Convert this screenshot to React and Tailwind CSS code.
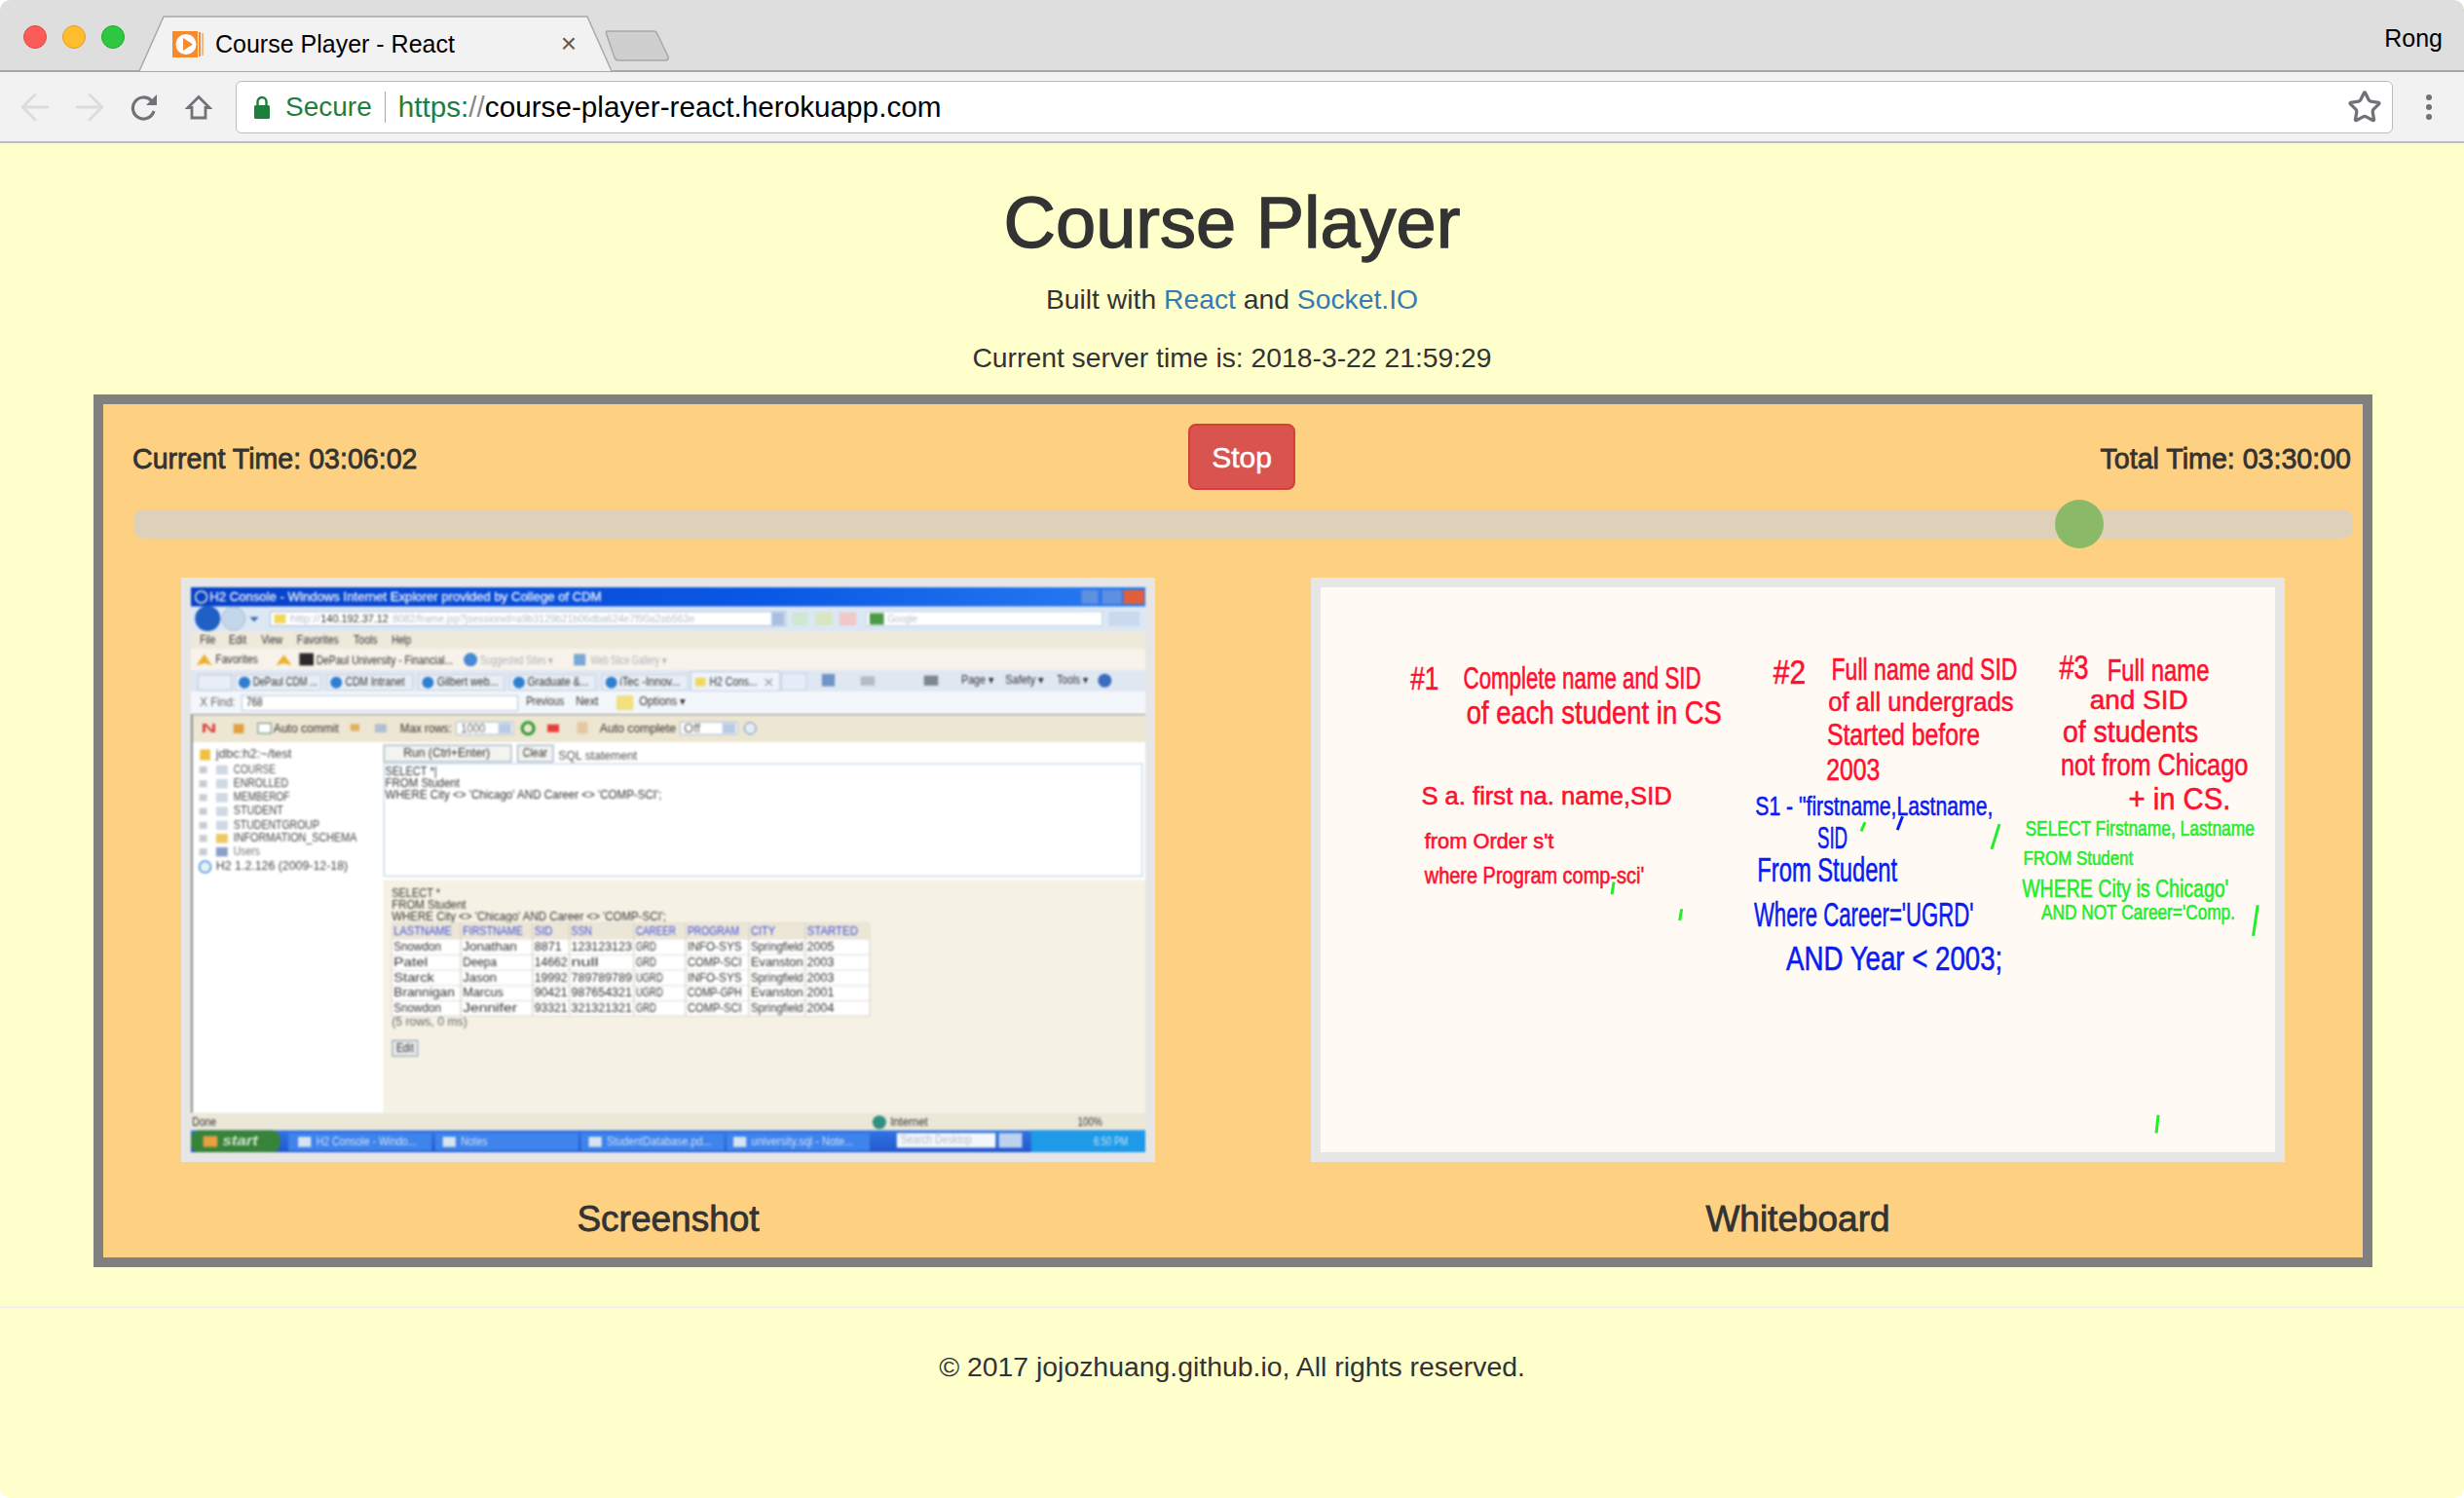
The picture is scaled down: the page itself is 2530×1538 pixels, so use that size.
import { ArrowLeft, ArrowRight, Star } from 'lucide-react';

// Canvas places below were read off a 1478x1467 grid, px/py turn them into the 980x580 picture
const px = (x) => (x - 39) / 1.508;
const py = (y) => (y - 35) / 2.529;

const T = ({ x, y, w, s = 30, c = '#333', b = false, it = false, line = 0, children }) => (
  <text
    x={px(x)}
    y={py(y)}
    textLength={w / 1.508}
    lengthAdjust="spacingAndGlyphs"
    fontSize={s / 2.529}
    fill={c}
    stroke={line ? c : 'none'}
    strokeWidth={line}
    fontWeight={b ? 700 : 400}
    fontStyle={it ? 'italic' : 'normal'}
    fontFamily="'Liberation Sans', sans-serif"
  >
    {children}
  </text>
);

const R = ({ x, y, w, h, c, line, rx }) => (
  <rect x={px(x)} y={py(y)} width={w / 1.508} height={h / 2.529} fill={c} stroke={line} strokeWidth={line ? 1 : 0} rx={rx} />
);

const Dot = ({ x, y, r, c, line, lw = 1 }) => (
  <circle cx={px(x)} cy={py(y)} r={r} fill={c} stroke={line} strokeWidth={line ? lw : 0} />
);

const Poly = ({ pts, c }) => (
  <polygon points={pts.map(([x, y]) => `${px(x)},${py(y)}`).join(' ')} fill={c} />
);

const treeRows = [
  ['COURSE', 517, 65, '#555'],
  ['ENROLLED', 553, 85, '#444'],
  ['MEMBEROF', 589, 87, '#444'],
  ['STUDENT', 625, 77, '#444'],
  ['STUDENTGROUP', 661, 133, '#444'],
  ['INFORMATION_SCHEMA', 695, 191, '#444'],
  ['Users', 730, 41, '#777'],
];

const columns = [350, 457, 568, 625, 725, 805, 903, 990, 1090];
const headers = [['LASTNAME', 90], ['FIRSTNAME', 93], ['SID', 28], ['SSN', 32], ['CAREER', 62], ['PROGRAM', 80], ['CITY', 38], ['STARTED', 79]];
const tableRows = [
  ['Snowdon', 'Jonathan', '8871', '123123123', 'GRD', 'INFO-SYS', 'Springfield', '2005'],
  ['Patel', 'Deepa', '14662', 'null', 'GRD', 'COMP-SCI', 'Evanston', '2003'],
  ['Starck', 'Jason', '19992', '789789789', 'UGRD', 'INFO-SYS', 'Springfield', '2003'],
  ['Brannigan', 'Marcus', '90421', '987654321', 'UGRD', 'COMP-GPH', 'Evanston', '2001'],
  ['Snowdon', 'Jennifer', '93321', '321321321', 'GRD', 'COMP-SCI', 'Springfield', '2004'],
];

const ieTabs = [
  ['DePaul CDM ...', 135, 100, 108],
  ['CDM Intranet', 278, 92, 250],
  ['Gilbert web...', 420, 95, 392],
  ['Graduate &...', 560, 95, 533],
  ['iTec -Innov...', 703, 94, 676],
];

const taskButtons = [
  ['H2 Console - Windo...', 190, 233, 155],
  ['Notes', 417, 457, 41],
  ['StudentDatabase.pd...', 643, 683, 162],
  ['university.sql - Note...', 868, 907, 158],
];

const ScreenshotPicture = () => (
  <svg viewBox="0 0 980 580" className="block h-full w-full blur-[1.1px]">
    <defs>
      <linearGradient id="titleBar" x1="0" x2="1" y1="0" y2="0">
        <stop offset="0" stopColor="#0640c8" />
        <stop offset="0.6" stopColor="#0a58e6" />
        <stop offset="1" stopColor="#2a7cf2" />
      </linearGradient>
      <linearGradient id="taskBar" x1="0" x2="0" y1="0" y2="1">
        <stop offset="0" stopColor="#2f74e6" />
        <stop offset="1" stopColor="#2458cc" />
      </linearGradient>
    </defs>
    <R x={39} y={35} w={1478} h={1467} c="#f5f1e4" />
    <R x={39} y={35} w={1478} h={50} c="url(#titleBar)" />
    <Dot x={55} y={60} r={6} c="none" line="#e0e8d0" lw={1.5} />
    <T x={68} y={71} w={607} s={32} c="#e8eefc" line={0.3}>H2 Console - Windows Internet Explorer provided by College of CDM</T>
    <R x={1418} y={42} w={26} h={36} c="#5f8fe0" />
    <R x={1450} y={42} w={30} h={36} c="#5f8fe0" />
    <R x={1483} y={42} w={32} h={36} c="#e0603c" />

    <R x={39} y={85} w={1478} h={65} c="#dce7f4" />
    <Dot x={65} y={116} r={13} c="#2060c4" />
    <Dot x={105} y={116} r={12} c="#c4d6ea" line="#a8bcd4" />
    <Poly pts={[[130, 112], [144, 112], [137, 124]]} c="#3668b0" />
    <R x={162} y={98} w={798} h={37} c="#fff" line="#a9bdd6" />
    <R x={168} y={105} w={18} h={24} c="#f0d860" />
    <T x={193} y={127} w={46} s={28} c="#b4bfcc">http://</T>
    <T x={240} y={127} w={105} s={28} c="#333">140.192.37.12</T>
    <T x={347} y={127} w={472} s={28} c="#b4bfcc">:8082/frame.jsp?jsessionid=a9b3129b21b06dba624e7f90a2ab563e</T>
    <R x={938} y={100} w={20} h={33} c="#a9bfe0" />
    <R x={970} y={100} w={24} h={34} c="#cfe6d2" />
    <R x={1006} y={100} w={26} h={34} c="#d9e6c0" />
    <R x={1043} y={100} w={26} h={34} c="#f0c8c8" />
    <R x={1085} y={98} w={365} h={37} c="#fff" line="#c2d0e2" />
    <R x={1090} y={102} w={22} h={30} c="#4a9a48" />
    <T x={1118} y={127} w={46} s={28} c="#b6bfcb">Google</T>
    <R x={1460} y={98} w={48} h={37} c="#c9d9ee" />

    <R x={39} y={150} w={1478} h={45} c="#efe9dc" />
    {[['File', 53, 24], ['Edit', 98, 27], ['View', 148, 33], ['Favorites', 203, 65], ['Tools', 291, 37], ['Help', 350, 30]].map(([t, x, w]) => (
      <T key={t} x={x} y={181} w={w}>{t}</T>
    ))}

    <R x={39} y={195} w={1478} h={55} c="#f7f3ea" />
    <Poly pts={[[60, 208], [66, 224], [72, 238], [60, 232], [48, 238], [53, 224]]} c="#eeb030" />
    <T x={77} y={233} w={66}>Favorites</T>
    <Poly pts={[[183, 210], [190, 225], [195, 238], [183, 232], [171, 238], [176, 225]]} c="#eeb030" />
    <R x={207} y={206} w={22} h={32} c="#2a2a2a" />
    <T x={233} y={234} w={212}>DePaul University - Financial...</T>
    <Dot x={472} y={223} r={7} c="#4a88d8" />
    <T x={487} y={234} w={113} c="#aeb4ba">Suggested Sites ▾</T>
    <R x={632} y={208} w={18} h={30} c="#7aa6d8" />
    <T x={658} y={234} w={117} c="#aeb4ba">Web Slice Gallery ▾</T>

    <R x={39} y={250} w={1478} h={55} c="#dfe7f3" />
    <R x={50} y={262} w={52} h={40} c="#e9eef6" line="#b9c8dc" />
    {ieTabs.map(([t, x, w, bx]) => (
      <g key={t}>
        <R x={bx} y={262} w={132} h={40} c="#e9eef6" line="#c6d2e2" />
        <Dot x={bx + 14} y={282} r={6} c="#2f7fd0" />
        <T x={x} y={291} w={w}>{t}</T>
      </g>
    ))}
    <R x={813} y={254} w={138} h={50} c="#eef3fa" line="#b9c8dc" />
    <R x={820} y={270} w={16} h={22} c="#f0d860" />
    <T x={842} y={290} w={74}>H2 Cons...</T>
    <T x={927} y={290} w={14} c="#999">x</T>
    <R x={954} y={258} w={38} h={44} c="#e6edf8" line="#c6d2e2" />
    <R x={1016} y={260} w={20} h={32} c="#6f94c6" />
    <R x={1076} y={266} w={22} h={24} c="#b6bcc4" />
    <R x={1174} y={264} w={22} h={26} c="#7d8792" />
    <T x={1232} y={286} w={50}>Page ▾</T>
    <T x={1300} y={286} w={60}>Safety ▾</T>
    <T x={1380} y={286} w={48}>Tools ▾</T>
    <Dot x={1454} y={277} r={7} c="#3a6cc0" />

    <R x={39} y={305} w={1478} h={60} c="#f3f6fb" />
    <T x={53} y={344} w={55} c="#666">X Find:</T>
    <R x={118} y={316} w={427} h={39} c="#fff" line="#b7c6da" />
    <T x={125} y={344} w={25}>768</T>
    <T x={558} y={342} w={59}>Previous</T>
    <T x={635} y={342} w={35}>Next</T>
    <R x={698} y={316} w={26} h={38} c="#f0e080" />
    <T x={733} y={342} w={72}>Options ▾</T>
    <R x={39} y={364} w={1478} h={3} c="#8d8d8d" />

    <R x={39} y={367} w={1478} h={70} c="#ece6d2" />
    <T x={55} y={412} w={24} s={34} c="#e0403c" b>N</T>
    <R x={105} y={390} w={16} h={24} c="#e0a040" />
    <R x={143} y={388} w={20} h={26} c="#fff" line="#5a8a7a" />
    <T x={167} y={411} w={101}>Auto commit</T>
    <R x={286} y={390} w={14} h={18} c="#e0b060" />
    <R x={324} y={390} w={18} h={22} c="#b0c0d0" />
    <T x={363} y={411} w={80}>Max rows:</T>
    <R x={450} y={385} w={88} h={32} c="#fff" line="#a9bdd6" />
    <T x={457} y={411} w={38} c="#666">1000</T>
    <R x={515} y={388} w={20} h={26} c="#b9cbe4" />
    <Dot x={561} y={401} r={6} c="none" line="#2f9a2f" lw={3} />
    <R x={591} y={391} w={18} h={20} c="#e83a3a" />
    <R x={637} y={385} w={16} h={30} c="#e4c8a0" />
    <T x={672} y={411} w={118}>Auto complete</T>
    <R x={797} y={385} w={88} h={32} c="#fff" line="#a9bdd6" />
    <T x={802} y={411} w={26} c="#666">Off</T>
    <R x={862} y={388} w={20} h={26} c="#b9cbe4" />
    <Dot x={905} y={401} r={6} c="#e4ecf6" line="#6a8ab8" />

    <R x={39} y={437} w={298} h={963} c="#fff" />
    <R x={39} y={367} w={3} h={1033} c="#8d8d8d" />
    <R x={53} y={456} w={16} h={28} c="#f0c040" />
    <T x={78} y={478} w={117} c="#444">jdbc:h2:~/test</T>
    {treeRows.map(([t, y, w, c]) => (
      <g key={t}>
        <R x={52} y={y - 17} w={12} h={18} c="#c8ccd2" />
        <R x={78} y={y - 20} w={18} h={24} c={t === 'INFORMATION_SCHEMA' ? '#efc860' : t === 'Users' ? '#8aa0c8' : '#cfd8e4'} />
        <T x={105} y={y} w={w} c={c}>{t}</T>
      </g>
    ))}
    <Dot x={61} y={761} r={6} c="#e4f0fa" line="#4a90d0" lw={1.5} />
    <T x={78} y={768} w={204} c="#444">H2 1.2.126 (2009-12-18)</T>

    <R x={337} y={437} w={1180} h={358} c="#fff" />
    <R x={338} y={445} w={197} h={43} c="#f3f3ef" line="#8aa2b8" />
    <T x={368} y={475} w={134}>Run (Ctrl+Enter)</T>
    <R x={545} y={445} w={55} h={43} c="#f3f3ef" line="#8aa2b8" />
    <T x={553} y={475} w={38}>Clear</T>
    <T x={608} y={482} w={122} c="#555">SQL statement</T>
    <R x={338} y={493} w={1174} h={292} c="#fff" line="#b7cbe3" />
    <T x={340} y={523} w={80}>SELECT *|</T>
    <T x={340} y={553} w={115}>FROM Student</T>
    <T x={340} y={585} w={428}>{"WHERE City <> 'Chicago' AND Career <> 'COMP-SCI';"}</T>

    <T x={350} y={840} w={75}>SELECT *</T>
    <T x={350} y={870} w={115}>FROM Student</T>
    <T x={350} y={900} w={425}>{"WHERE City <> 'Chicago' AND Career <> 'COMP-SCI';"}</T>
    <R x={350} y={907} w={740} h={241} c="#fff" line="#d8d4c6" />
    <R x={350} y={907} w={740} h={40} c="#ece6d6" />
    {columns.slice(1, -1).map((x) => <R key={x} x={x - 1} y={907} w={2} h={241} c="#d8d4c6" />)}
    {[947, 988, 1028, 1068, 1108].map((y) => <R key={y} x={350} y={y} w={740} h={2} c="#d8d4c6" />)}
    {headers.map(([t, w], n) => (
      <T key={t} x={columns[n] + 3} y={937} w={w} c="#3c50e0">{t}</T>
    ))}
    {tableRows.map((row, r) =>
      row.map((cell, n) => (
        <T key={`${r}-${n}`} x={columns[n] + 3} y={978 + r * 40} w={Math.min(cell.length * 10.5, columns[n + 1] - columns[n] - 6)}>{cell}</T>
      ))
    )}
    <T x={350} y={1172} w={117} c="#666">(5 rows, 0 ms)</T>
    <R x={351} y={1212} w={39} h={40} c="#e8eaea" line="#7f9aac" />
    <T x={357} y={1242} w={27}>Edit</T>

    <R x={39} y={1400} w={1478} h={45} c="#ece8d8" />
    <T x={41} y={1434} w={37}>Done</T>
    <Dot x={1105} y={1424} r={7} c="#2f9080" />
    <T x={1122} y={1434} w={58}>Internet</T>
    <T x={1412} y={1434} w={38}>100%</T>

    <R x={39} y={1445} w={1478} h={57} c="url(#taskBar)" />
    <R x={39} y={1445} w={138} h={57} c="#37833a" rx={8} />
    <R x={58} y={1460} w={22} h={28} c="#e8a040" />
    <T x={88} y={1485} w={55} s={36} c="#cfe4cc" b it>start</T>
    {taskButtons.map(([t, bx, x, w]) => (
      <g key={t}>
        <R x={bx} y={1452} w={222} h={46} c="#3f83ec" />
        <R x={x - 28} y={1462} w={20} h={26} c="#d8e4f0" />
        <T x={x} y={1483} w={w} c="#cfe0f6">{t}</T>
      </g>
    ))}
    <R x={1132} y={1452} w={153} h={38} c="#f4f7fb" />
    <T x={1138} y={1480} w={110} c="#b6c2d0">Search Desktop</T>
    <R x={1290} y={1452} w={36} h={38} c="#bcd2ee" />
    <R x={1340} y={1445} w={177} h={57} c="#1e9ae8" />
    <T x={1437} y={1483} w={53} c="#bfe2f8">6:50 PM</T>
  </svg>
);

const RED = '#ff1030';
const BLUE = '#0a1cf0';
const GREEN = '#22ee2a';

const boardLines = [
  ['#1', 178, 300, 44, 84, RED],
  ['Complete name and SID', 260, 298, 368, 78, RED],
  ['of each student in CS', 265, 390, 395, 84, RED],
  ['#2', 740, 285, 50, 88, RED],
  ['Full name and SID', 830, 275, 288, 80, RED],
  ['of all undergrads', 825, 355, 287, 72, RED],
  ['Started before', 823, 445, 237, 80, RED],
  ['2003', 822, 535, 83, 80, RED],
  ['#3', 1183, 272, 45, 88, RED],
  ['Full name', 1257, 278, 158, 78, RED],
  ['and SID', 1230, 350, 152, 72, RED],
  ['of students', 1188, 438, 210, 80, RED],
  ['not from Chicago', 1185, 522, 290, 80, RED],
  ['+ in CS.', 1290, 612, 158, 80, RED],
  ['S a. first na. name,SID', 195, 600, 388, 64, RED],
  ["from Order s't", 200, 712, 200, 58, RED],
  ["where Program comp-sci'", 200, 805, 340, 60, RED],
  ['S1 - "firstname,Lastname,', 712, 628, 368, 72, BLUE],
  ['SID', 808, 712, 47, 80, BLUE],
  ['From Student', 715, 800, 217, 90, BLUE],
  ["Where Career='UGRD'", 710, 915, 340, 90, BLUE],
  ['AND Year < 2003;', 760, 1030, 335, 90, BLUE],
  ['SELECT Firstname, Lastname', 1130, 680, 355, 58, GREEN],
  ['FROM Student', 1127, 755, 170, 50, GREEN],
  ["WHERE City is Chicago'", 1125, 838, 320, 64, GREEN],
  ["AND NOT Career='Comp.", 1155, 897, 300, 56, GREEN],
];

const boardMarks = [
  [1090, 650, 1078, 715, GREEN],
  [1490, 860, 1483, 940, GREEN],
  [493, 800, 490, 832, GREEN],
  [598, 870, 595, 900, GREEN],
  [1336, 1405, 1333, 1452, GREEN],
  [882, 645, 876, 668, GREEN],
  [940, 630, 932, 665, BLUE],
];

const WhiteboardPicture = () => (
  <svg viewBox="0 0 980 580" className="block h-full w-full">
    {boardLines.map(([t, x, y, w, s, c]) => (
      <T key={t} x={x} y={y} w={w} s={s} c={c} line={0.6}>{t}</T>
    ))}
    {boardMarks.map(([x1, y1, x2, y2, c]) => (
      <line key={x1} x1={px(x1)} y1={py(y1)} x2={px(x2)} y2={py(y2)} stroke={c} strokeWidth={3} />
    ))}
  </svg>
);

const Favicon = () => (
  <svg width="32" height="27" viewBox="0 0 32 27" className="shrink-0">
    <rect width="26" height="27" fill="#f58a2e" />
    <rect x="27" y="1" width="2" height="25" fill="#f58a2e" />
    <rect x="30" y="2" width="2" height="23" fill="#f9b67a" />
    <circle cx="14" cy="13.5" r="10.5" fill="#fff" />
    <path d="M11 7 L21 13.5 L11 20 Z" fill="#f58a2e" />
  </svg>
);

const ReloadIcon = () => (
  <svg width="28" height="27" viewBox="0 0 28 27" fill="none" className="shrink-0">
    <path d="M21.5 6.5 A11 11 0 1 0 24 17" stroke="#6f7277" strokeWidth="3.2" />
    <path d="M27 0 V11 H16 Z" fill="#6f7277" />
  </svg>
);

const HomeIcon = () => (
  <svg width="28" height="26" viewBox="0 0 28 26" fill="none" stroke="#6f7277" strokeWidth="2.8" className="shrink-0">
    <path d="M14 2.5 L25 13.5 H21 V24 H7 V13.5 H3 Z" />
  </svg>
);

const LockIcon = () => (
  <svg width="18" height="24" viewBox="0 0 18 24" className="shrink-0">
    <rect x="1" y="10" width="16" height="14" rx="1.5" fill="#1e7e3e" />
    <path d="M4.5 11 V6.5 a4.5 4.5 0 0 1 9 0 V11" fill="none" stroke="#1e7e3e" strokeWidth="2.4" />
  </svg>
);

const App = () => {
  return (
    <div className="h-[1538px] overflow-hidden rounded-[10px] bg-[#ffffcc] font-['Liberation_Sans',sans-serif] text-[#333]">
      {/* browser tab strip */}
      <div className="flex h-[74px] items-end rounded-t-[10px] border-b-2 border-[#a8a8a8] bg-[#dedede]">
        <div className="flex h-full w-[143px] shrink-0 items-center gap-4 pl-6">
          <span className="mt-1 h-6 w-6 rounded-full border border-[#e2463f] bg-[#fc5c57]" />
          <span className="mt-1 h-6 w-6 rounded-full border border-[#dfa023] bg-[#febc2e]" />
          <span className="mt-1 h-6 w-6 rounded-full border border-[#1dad2b] bg-[#2ec840]" />
        </div>
        <div className="relative -mb-[2px] flex h-[58px] w-[485px] shrink-0 items-center pl-[34px] pr-[36px]">
          <svg viewBox="0 0 485 58" className="absolute inset-0 h-full w-full">
            <path d="M0 57 L25 1 H460 L485 57" fill="#f2f2f2" stroke="#a8a8a8" strokeWidth="1.5" />
          </svg>
          <div className="relative flex w-full items-center">
            <Favicon />
            <span className="ml-[12px] flex-1 text-[25px] leading-none text-black">Course Player - React</span>
            <span className="text-[28px] leading-none text-[#5a5a5a]">×</span>
          </div>
        </div>
        <svg width="68" height="34" viewBox="0 0 68 34" className="mb-2 -ml-[7px] shrink-0">
          <path d="M2 2 H50 Q53 2 54 5 L65 28 Q66 32 62 32 H14 Q11 32 10 29 L2 6 Q1 2 2 2 Z" fill="#cfcfcf" stroke="#a8a8a8" strokeWidth="1.5" />
        </svg>
        <div className="flex-1" />
        <span className="mr-[22px] mt-[6px] self-center text-[25px] leading-none text-black">Rong</span>
      </div>

      {/* browser toolbar */}
      <div className="flex h-[73px] items-center border-b-2 border-[#bdbdbd] bg-[#f2f2f2] pt-[1px]">
        <div className="flex w-[242px] shrink-0 items-center pl-[14px]">
          <ArrowLeft size={44} strokeWidth={1.6} color="#dcdcdc" className="shrink-0" />
          <ArrowRight size={44} strokeWidth={1.6} color="#dcdcdc" className="ml-[12px] shrink-0" />
          <div className="ml-[20px]"><ReloadIcon /></div>
          <div className="ml-[28px]"><HomeIcon /></div>
        </div>
        <div className="flex h-[54px] w-[2215px] shrink-0 items-center rounded-[6px] border border-[#bcbcbc] bg-white pl-[17px] pr-[10px]">
          <LockIcon />
          <span className="ml-[15px] text-[28px] leading-none text-[#1e7e3e]">Secure</span>
          <span className="ml-[13px] h-8 w-px bg-[#aaa]" />
          <span className="ml-[13px] flex-1 text-[29.7px] leading-none text-black">
            <span className="text-[#1e7e3e]">https:</span><span className="text-[#888]">//</span>course-player-react.herokuapp.com
          </span>
          <Star size={36} strokeWidth={2.2} color="#6f7277" strokeLinejoin="miter" />
        </div>
        <div className="flex flex-1 flex-col items-center gap-[4px]">
          <span className="h-[6px] w-[6px] rounded-full bg-[#6f7277]" />
          <span className="h-[6px] w-[6px] rounded-full bg-[#6f7277]" />
          <span className="h-[6px] w-[6px] rounded-full bg-[#6f7277]" />
        </div>
      </div>

      {/* page */}
      <div className="pt-[42px] text-center text-[28.3px] leading-[40px]">
        <h1 className="text-[74px] font-medium leading-[80px] [-webkit-text-stroke:1.4px_#333]">Course Player</h1>
        <p className="mt-[18px]">
          Built with <a className="text-[#337ab7]">React</a> and <a className="text-[#337ab7]">Socket.IO</a>
        </p>
        <p className="mt-[20px]">Current server time is: 2018-3-22 21:59:29</p>
      </div>

      <div className="mt-[18px] ml-[96px] w-[2340px] border-[10px] border-[#808080] bg-[#fed182] text-[#333]">
        <div className="flex items-center pl-[30px] pr-[12px] pt-[20px]">
          <div className="mt-[4px] w-[1084px] text-[28.6px] leading-none [-webkit-text-stroke:0.8px_#333]">Current Time: 03:06:02</div>
          <button className="h-[68px] w-[110px] rounded-[8px] border-2 border-[#d43f3a] bg-[#d9534f] text-[30px] text-white [-webkit-text-stroke:0.5px_#fff]">Stop</button>
          <div className="mt-[4px] flex-1 text-right text-[28.6px] leading-none [-webkit-text-stroke:0.8px_#333]">Total Time: 03:30:00</div>
        </div>

        <div className="relative mt-[20px] ml-[31px] mr-[10px] h-[30px] rounded-[10px] bg-[#dfd1b9]">
          <div className="absolute -top-[10px] left-[1973px] h-[50px] w-[50px] rounded-full bg-[#8aba68]" />
        </div>

        <div className="mt-[40px] flex gap-[160px] pl-[80px]">
          <div className="w-[1000px] text-center">
            <div className="h-[600px] bg-[#e6e6e6] p-[10px]"><ScreenshotPicture /></div>
            <div className="mt-[39px] pb-[19px] text-[37px] leading-[40px] [-webkit-text-stroke:0.8px_#333]">Screenshot</div>
          </div>
          <div className="w-[1000px] text-center">
            <div className="h-[600px] bg-[#e6e6e6] p-[10px]"><div className="h-full bg-[#fffaf3]"><WhiteboardPicture /></div></div>
            <div className="mt-[39px] pb-[19px] text-[37px] leading-[40px] [-webkit-text-stroke:0.8px_#333]">Whiteboard</div>
          </div>
        </div>
      </div>

      <footer className="mt-[40px] border-t-2 border-[#f2f2ea] pt-[40px] text-center text-[28.4px] leading-[40px]">
        © 2017 jojozhuang.github.io, All rights reserved.
      </footer>
    </div>
  );
};

export default App;
